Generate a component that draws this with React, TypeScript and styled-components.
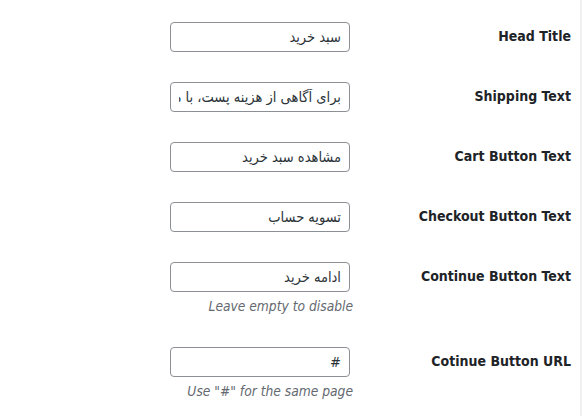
import styled, { createGlobalStyle } from 'styled-components';

const GlobalStyle = createGlobalStyle`
  html, body {
    margin: 0;
    padding: 0;
    background: #f0f0f1;
  }
`;

const Page = styled.div`
  width: 580px;
  height: 416px;
  background: #fff;
  overflow: hidden;
  direction: rtl;
  padding: 7px 9px 0 0;
  box-sizing: border-box;
`;

const Table = styled.div`
  display: flex;
  flex-direction: column;
`;

const Row = styled.div`
  display: flex;
  align-items: flex-start;
`;

const Label = styled.div`
  width: 200px;
  padding: 20px 0 20px 10px;
  line-height: 1.3;
  font-family: 'DejaVu Sans Condensed', 'DejaVu Sans', sans-serif;
  font-weight: 700;
  font-size: 14px;
  color: #1d2327;
  text-align: right;
`;

const Cell = styled.div`
  padding: 15px 10px;
  display: flex;
  flex-direction: column;
  align-items: flex-start;
`;

const Input = styled.input`
  width: 180px;
  height: 30px;
  box-sizing: border-box;
  margin: 0 1px;
  padding: 0 8px;
  border: 1px solid #8c8f94;
  border-radius: 4px;
  background: #fff;
  color: #2c3338;
  font-family: 'DejaVu Sans Condensed', 'DejaVu Sans', sans-serif;
  font-size: 14.5px;
  direction: rtl;
  text-align: right;
  outline: none;
`;

const Description = styled.p`
  margin: 4px -2px 0 0;
  font-family: 'DejaVu Sans Condensed', 'DejaVu Sans', sans-serif;
  font-style: italic;
  font-size: 13.7px;
  line-height: 21px;
  color: #646970;
  direction: ltr;
`;

const fields = [
  { label: 'Head Title', value: 'سبد خرید' },
  { label: 'Shipping Text', value: 'برای آگاهی از هزینه پست، با ما تماس بگیرید' },
  { label: 'Cart Button Text', value: 'مشاهده سبد خرید' },
  { label: 'Checkout Button Text', value: 'تسویه حساب' },
  { label: 'Continue Button Text', value: 'ادامه خرید', hint: 'Leave empty to disable' },
  { label: 'Cotinue Button URL', value: '#', hint: 'Use "#" for the same page' },
];

export default function App() {
  return (
    <>
      <GlobalStyle />
      <Page>
        <Table>
          {fields.map((f) => (
            <Row key={f.label}>
              <Label>{f.label}</Label>
              <Cell>
                <Input type="text" defaultValue={f.value} />
                {f.hint && <Description>{f.hint}</Description>}
              </Cell>
            </Row>
          ))}
        </Table>
      </Page>
    </>
  );
}
